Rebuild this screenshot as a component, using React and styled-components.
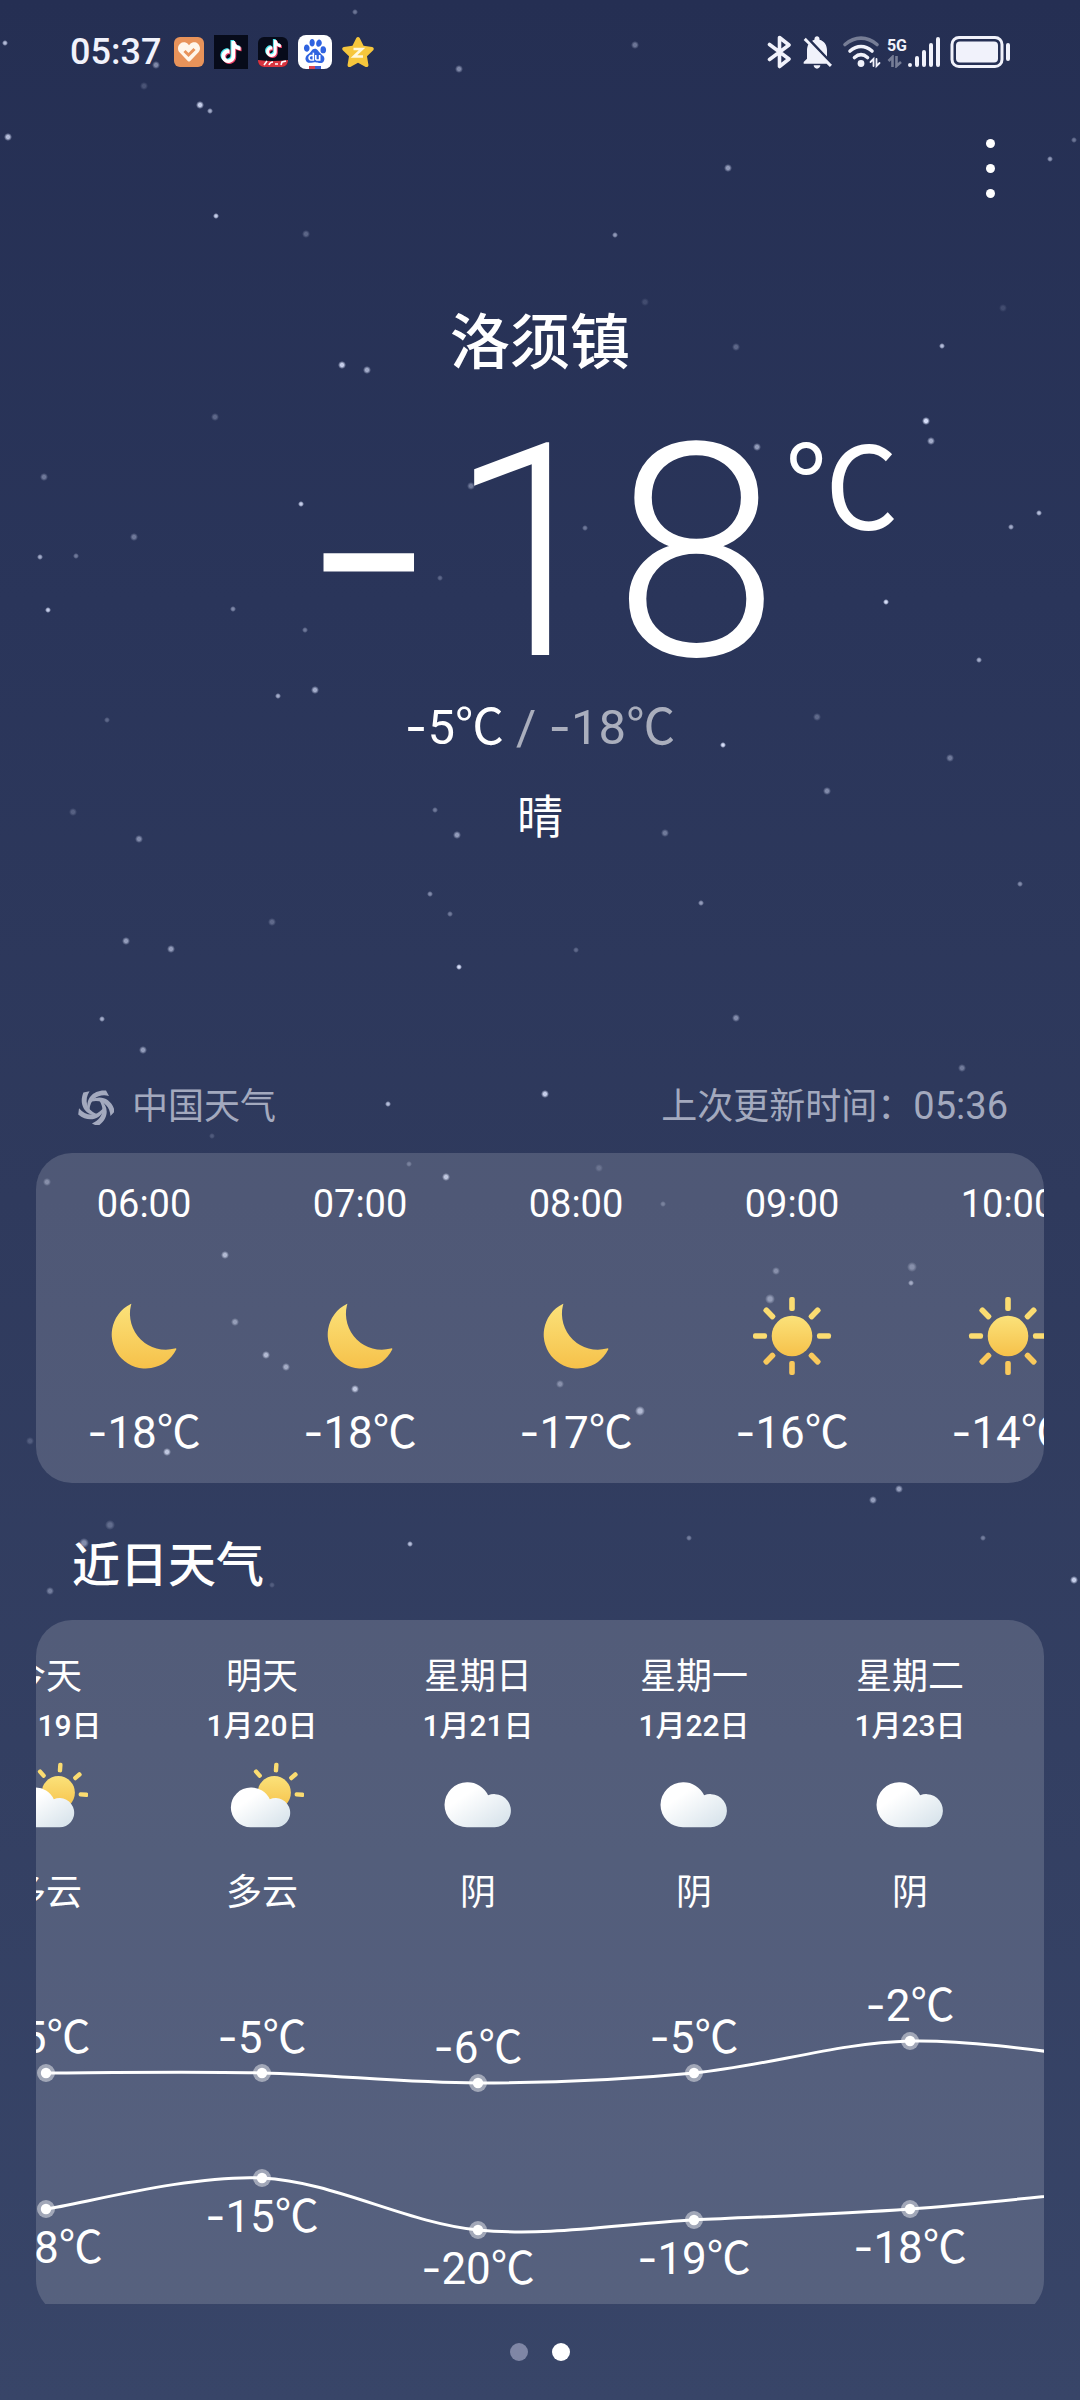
import React, { useLayoutEffect, useRef } from "react";
import styled, { createGlobalStyle, css } from "styled-components";
import { FaHeart, FaStar } from "react-icons/fa";
import { SiBaidu, SiTiktok } from "react-icons/si";
import { MdNotificationsOff } from "react-icons/md";

const COLUMN = 216;

const hours = [
  { time: "06:00", icon: "moon", temp: -18 },
  { time: "07:00", icon: "moon", temp: -18 },
  { time: "08:00", icon: "moon", temp: -17 },
  { time: "09:00", icon: "sun", temp: -16 },
  { time: "10:00", icon: "sun", temp: -14 },
];

const days = [
  { name: "今天", date: "1月19日", icon: "partly", text: "多云" },
  { name: "明天", date: "1月20日", icon: "partly", text: "多云" },
  { name: "星期日", date: "1月21日", icon: "cloud", text: "阴" },
  { name: "星期一", date: "1月22日", icon: "cloud", text: "阴" },
  { name: "星期二", date: "1月23日", icon: "cloud", text: "阴" },
];

// one value more than there are days, so the curves run on past the last column
const highs = [-5, -5, -6, -5, -2, -4];
const lows = [-18, -15, -20, -19, -18, -16];

// x, y, radius, opacity
const stars = [
  [355, 12, 2, 0.4], [5, 43, 2, 0.8], [635, 45, 3, 0.4], [459, 69, 3, 0.5], [156, 65, 3, 0.5],
  [144, 86, 3, 0.2], [200, 105, 3, 0.9], [210, 111, 2, 0.7], [8, 137, 3, 0.8], [728, 168, 3, 0.6],
  [1050, 159, 2, 0.6], [1074, 140, 2, 0.4], [216, 216, 2, 0.9], [306, 234, 3, 0.3], [615, 235, 2, 0.6],
  [645, 302, 3, 0.15], [736, 347, 3, 0.3], [942, 346, 2, 0.8], [1003, 308, 3, 0.15], [342, 365, 3, 0.9],
  [367, 370, 3, 0.7], [215, 417, 3, 0.3], [926, 421, 3, 1], [931, 441, 3, 0.7], [757, 447, 3, 0.6],
  [44, 477, 3, 0.4], [471, 486, 3, 0.4], [301, 504, 2, 0.9], [585, 528, 2, 0.4], [1039, 513, 2, 0.8],
  [1011, 527, 2, 0.7], [134, 537, 3, 0.4], [40, 557, 2, 0.7], [76, 556, 2, 0.4], [440, 578, 2, 0.3],
  [886, 602, 2, 1], [48, 610, 2, 0.9], [233, 609, 2, 0.5], [305, 630, 2, 0.4], [979, 660, 2, 0.7],
  [315, 690, 3, 0.7], [278, 696, 2, 0.7], [107, 720, 2, 0.3], [817, 717, 3, 0.3], [723, 745, 2, 1],
  [950, 758, 3, 0.4], [827, 791, 3, 0.5], [73, 812, 3, 0.25], [435, 810, 2, 0.4], [457, 835, 3, 0.6],
  [139, 839, 3, 0.5], [665, 833, 3, 0.4], [1020, 884, 2, 0.5], [701, 903, 2, 0.6], [430, 894, 2, 0.5],
  [450, 914, 2, 0.4], [272, 922, 3, 0.3], [126, 941, 3, 0.6], [171, 949, 3, 0.6], [576, 950, 2, 0.3],
  [459, 967, 2, 1], [102, 1019, 2, 0.7], [736, 1018, 3, 0.5], [143, 1050, 3, 0.6], [545, 1094, 3, 0.9],
  [962, 1068, 3, 0.4], [388, 1104, 2, 0.8], [212, 1136, 2, 0.2], [409, 1164, 2, 0.3], [446, 1177, 3, 0.8],
  [47, 1182, 3, 0.4], [225, 1255, 3, 0.7], [235, 1322, 3, 0.5], [266, 1355, 3, 0.7], [286, 1367, 3, 0.6],
  [355, 1389, 3, 0.8], [167, 1452, 3, 0.8], [30, 1441, 3, 0.2], [599, 1168, 3, 0.2], [663, 1204, 2, 0.3],
  [776, 1271, 3, 0.4], [912, 1267, 4, 0.4], [911, 1283, 2, 0.6], [770, 1299, 4, 0.5], [560, 1384, 3, 0.4],
  [640, 1411, 4, 0.7], [899, 1489, 3, 0.6], [873, 1500, 3, 0.6], [110, 1525, 4, 0.3],
  [84, 1543, 4, 0.5], [410, 1544, 2, 0.8], [50, 1591, 3, 0.4], [272, 1585, 2, 0.2], [1074, 1580, 3, 0.9],
  [983, 1538, 2, 0.4], [689, 1538, 2, 0.4],
];

const GlobalStyle = createGlobalStyle`
  * {
    box-sizing: border-box;
  }

  body {
    margin: 0;
    background: #2f3a5d;
  }
`;

function Temp({ value }) {
  return (
    <>
      {value < 0 && <Minus>-</Minus>}
      {Math.abs(value)}℃
    </>
  );
}

function Moon() {
  return (
    <WeatherSvg viewBox="0 0 84 84">
      <path
        d="M28.8 10A34 34 0 1 0 74.2 55.6Q74.8 53.8 72.8 54.6A36 36 0 0 1 28.9 11.5Q29.8 9.4 28.8 10Z"
        fill="url(#warm)"
      />
    </WeatherSvg>
  );
}

function Sun() {
  return (
    <WeatherSvg viewBox="0 0 84 84">
      <circle cx="42" cy="42" r="20.3" fill="url(#warm)" />
      {[0, 45, 90, 135, 180, 225, 270, 315].map((angle) => (
        <rect
          key={angle}
          x="39.2"
          y="3"
          width="5.6"
          height="14"
          rx="2"
          fill={angle > 100 && angle < 260 ? "#f9c95c" : "#fbdc71"}
          transform={`rotate(${angle} 42 42)`}
        />
      ))}
    </WeatherSvg>
  );
}

function Partly() {
  return (
    <WeatherSvg viewBox="0 0 84 84">
      <circle cx="54.3" cy="40.7" r="16.6" fill="url(#warm)" />
      {[-41, 4, 49, 94].map((angle) => (
        <rect
          key={angle}
          x="52.2"
          y="10.7"
          width="4.4"
          height="9.6"
          rx="1.8"
          fill="#fbdc71"
          transform={`rotate(${angle} 54.3 40.7)`}
        />
      ))}
      <path d="M30.7 35.6a19.8 19.8 0 0 0 0 39.7H55.6a14.6 14.6 0 1 0-5.8-28A19.8 19.8 0 0 0 30.7 35.6Z" fill="url(#cloud)" />
    </WeatherSvg>
  );
}

function Cloud() {
  return (
    <WeatherSvg viewBox="0 0 84 84">
      <path d="M31 30.3a22.5 22.5 0 0 0 0 45H58.7a16.6 16.6 0 1 0-6.6-32A22.5 22.5 0 0 0 31 30.3Z" fill="url(#cloud)" />
    </WeatherSvg>
  );
}

const icons = { moon: Moon, sun: Sun, partly: Partly, cloud: Cloud };

const yOf = (temp) => Math.round(58 - 10.5 * temp);
const xOf = (index) => COLUMN / 2 + COLUMN * index;

function curve(values) {
  const points = values.map((v, i) => [xOf(i), yOf(v)]);
  const at = (i) => points[Math.max(0, Math.min(points.length - 1, i))];
  let d = `M${points[0][0]} ${points[0][1]}`;
  for (let i = 0; i < points.length - 1; i++) {
    const [p0, p1, p2, p3] = [at(i - 1), at(i), at(i + 1), at(i + 2)];
    d += ` C${p1[0] + (p2[0] - p0[0]) / 6} ${p1[1] + (p2[1] - p0[1]) / 6}`;
    d += ` ${p2[0] - (p3[0] - p1[0]) / 6} ${p2[1] - (p3[1] - p1[1]) / 6}`;
    d += ` ${p2[0]} ${p2[1]}`;
  }
  return d;
}

function TrendLine({ values, labelOffset }) {
  return (
    <g>
      <path d={curve(values)} fill="none" stroke="#fff" strokeWidth="3" />
      {days.map((day, i) => (
        <g key={day.date}>
          <circle cx={xOf(i)} cy={yOf(values[i])} r="9" fill="#fff" fillOpacity="0.45" />
          <circle cx={xOf(i)} cy={yOf(values[i])} r="5.2" fill="#fff" />
          <TrendLabel x={xOf(i)} y={yOf(values[i]) + labelOffset}>
            <tspan fontFamily="Inter">-</tspan>
            {Math.abs(values[i])}℃
          </TrendLabel>
        </g>
      ))}
    </g>
  );
}

function Forecast() {
  const scroller = useRef(null);

  // leave today half out of view on the left
  useLayoutEffect(() => {
    scroller.current.scrollLeft = 98;
  }, []);

  return (
    <ForecastCard ref={scroller}>
      <ForecastInner>
        <Columns>
          {days.map((day) => {
            const Icon = icons[day.icon];
            return (
              <Day key={day.date}>
                <DayName>{day.name}</DayName>
                <DayDate>{day.date}</DayDate>
                <Icon />
                <DayText>{day.text}</DayText>
              </Day>
            );
          })}
        </Columns>
        <Trend width={COLUMN * highs.length} height="354">
          <TrendLine values={highs} labelOffset={-20} />
          <TrendLine values={lows} labelOffset={54} />
        </Trend>
      </ForecastInner>
    </ForecastCard>
  );
}

function StatusIcons() {
  return (
    <StatusGroup $gap={5}>
      <svg width="25" height="34" viewBox="0 0 25 34" fill="none" stroke="#f1f2fb" strokeLinecap="round" strokeLinejoin="round">
        <path d="M2.5 9.5L22 24L12.5 31.5V2.5L22 10L2.5 24.5" strokeWidth="3.6" />
      </svg>
      <MdNotificationsOff size={40} />
      <svg width="40" height="34" viewBox="0 0 40 34" fill="none" strokeLinecap="round">
        <path d="M3 9.5C13 1 25 1 35 9.5" stroke="#f1f2fb" strokeOpacity="0.4" strokeWidth="3.6" />
        <path d="M8 16C15 10 23 10 30 16" stroke="#f1f2fb" strokeWidth="3.6" />
        <path d="M12.5 22.5C17 18.5 21 18.5 25.5 22.5" stroke="#f1f2fb" strokeWidth="3.6" />
        <circle cx="19" cy="28.5" r="3.4" fill="#f1f2fb" />
        <path d="M31.5 31V24L28.5 27M34.5 24V31L37.5 28" stroke="#f1f2fb" strokeWidth="1.8" />
      </svg>
      <Signal>
        <SignalLabel>
          <span>5G</span>
          <svg width="16" height="13" viewBox="0 0 16 13" fill="none" stroke="#f1f2fb" strokeOpacity="0.4" strokeWidth="2.6">
            <path d="M5.5 12V2L1.5 6M9.5 1V11L14 7" />
          </svg>
        </SignalLabel>
        <svg width="34" height="32" viewBox="0 0 34 32" stroke="#f1f2fb" strokeWidth="4" strokeLinecap="round">
          <path d="M3 29V29M10 29V22M17 29V16M24 29V9M31 29V3" />
        </svg>
      </Signal>
      <svg width="66" height="34" viewBox="-4 0 66 34">
        <rect x="2" y="2.5" width="50" height="29" rx="7" fill="none" stroke="#f1f2fb" strokeWidth="3" />
        <rect x="6" y="6.5" width="42" height="21" rx="4" fill="#f1f2fb" />
        <rect x="56" y="8" width="4" height="18" rx="2" fill="#f1f2fb" />
      </svg>
    </StatusGroup>
  );
}

function TiktokMark({ x, y, size }) {
  return (
    <>
      <SiTiktok x={x - 1} y={y - 1} size={size} color="#4de8f0" />
      <SiTiktok x={x + 1} y={y + 1} size={size} color="#f0436a" />
      <SiTiktok x={x} y={y} size={size} color="#fff" />
    </>
  );
}

function NotificationIcons() {
  return (
    <StatusGroup $gap={9}>
      <svg width="32" height="32" viewBox="0 0 32 32">
        <rect x="1" y="1" width="30" height="30" rx="6" fill="#e8935a" />
        <FaHeart x="5" y="5" size={22} color="#fff6ea" />
        <path d="M11.5 15l4 4 6-6" fill="none" stroke="#e8935a" strokeWidth="3" />
      </svg>
      <svg width="34" height="34" viewBox="0 0 34 34">
        <rect width="34" height="34" fill="#070b1a" />
        <TiktokMark x={6} y={6} size={22} />
      </svg>
      <svg width="32" height="32" viewBox="0 0 32 32">
        <rect x="1" y="1" width="30" height="30" rx="6" fill="#070b1a" />
        <TiktokMark x={8} y={4} size={17} />
        <path d="M1 24q14 2 30 0v1a6 6 0 0 1-6 6H7a6 6 0 0 1-6-6z" fill="#d8343f" />
        <path d="M7 29l3-4M12 29q1-3 4-3M18 28h3M24 29l1-3 4-1" stroke="#fff" strokeWidth="1.6" fill="none" />
      </svg>
      <svg width="34" height="34" viewBox="0 0 34 34">
        <rect width="34" height="34" rx="8" fill="#fff" />
        <SiBaidu x="5" y="4" size={24} color="#2f63e0" />
        <rect x="11" y="31" width="6" height="3" fill="#d8434f" />
        <rect x="17" y="31" width="6" height="3" fill="#3a5fd0" />
      </svg>
      <svg width="34" height="34" viewBox="0 0 34 34">
        <FaStar x="0" y="0" size={34} color="#f6c63c" />
        <path d="M12.5 14H21L13 21.5H22" fill="none" stroke="#fff8dc" strokeWidth="2.6" />
      </svg>
    </StatusGroup>
  );
}

function Swirl() {
  return (
    <svg width="36" height="36" viewBox="0 0 36 36" fill="#a3a9be">
      {[0, 72, 144, 216, 288].map((angle) => (
        <path
          key={angle}
          d="M9.8 20C7.5 10 15 0.5 28 1.5L31 7C21 4.5 12.5 9.5 11.5 20.5Z"
          transform={`rotate(${angle} 18 18)`}
        />
      ))}
    </svg>
  );
}

export default function App() {
  return (
    <Screen>
      <GlobalStyle />
      <Sky viewBox="0 0 1080 2400" preserveAspectRatio="xMidYMin slice" aria-hidden="true">
        <defs>
          <linearGradient id="warm" x1="0" y1="0" x2="0" y2="1">
            <stop offset="0" stopColor="#fbe27a" />
            <stop offset="1" stopColor="#f6c14a" />
          </linearGradient>
          <linearGradient id="cloud" x1="0" y1="0" x2="1" y2="1">
            <stop offset="0.3" stopColor="#fff" />
            <stop offset="1" stopColor="#d3e0e9" />
          </linearGradient>
          <radialGradient id="star">
            <stop offset="0.4" stopColor="#d5ddf8" />
            <stop offset="1" stopColor="#d5ddf8" stopOpacity="0" />
          </radialGradient>
        </defs>
        {stars.map(([x, y, r, opacity]) => (
          <circle key={`${x}-${y}`} cx={x} cy={y} r={r + 1} opacity={opacity} fill="url(#star)" />
        ))}
      </Sky>

      <StatusBar>
        <StatusGroup $gap={12}>
          <Clock>05:37</Clock>
          <NotificationIcons />
        </StatusGroup>
        <StatusIcons />
      </StatusBar>

      <Content>
        <Toolbar>
          <MenuButton type="button" aria-label="更多">
            <MenuDot />
            <MenuDot />
            <MenuDot />
          </MenuButton>
        </Toolbar>

        <Current>
          <Place>洛须镇</Place>
          <Now>
            <NowValue>
              <NowMinus>-</NowMinus>18
            </NowValue>
            <NowUnit>℃</NowUnit>
          </Now>
          <Range>
            <Temp value={-5} />
            <RangeLow>
              {" / "}
              <Temp value={-18} />
            </RangeLow>
          </Range>
          <Condition>晴</Condition>
        </Current>

        <SourceRow>
          <Source>
            <Swirl />
            中国天气
          </Source>
          <span>
            上次更新时间：<UpdatedAt>05:36</UpdatedAt>
          </span>
        </SourceRow>

        <HourlyCard>
          {hours.map((hour) => {
            const Icon = icons[hour.icon];
            return (
              <Hour key={hour.time}>
                <HourTime>{hour.time}</HourTime>
                <Icon />
                <HourTemp>
                  <Temp value={hour.temp} />
                </HourTemp>
              </Hour>
            );
          })}
        </HourlyCard>

        <SectionTitle>近日天气</SectionTitle>
        <Forecast />
      </Content>

      <Pager>
        <PagerDot />
        <PagerDot $active />
      </Pager>
    </Screen>
  );
}

const hideScrollbar = css`
  scrollbar-width: none;

  &::-webkit-scrollbar {
    display: none;
  }
`;

const Screen = styled.div`
  position: relative;
  display: flex;
  flex-direction: column;
  height: 100vh;
  color: #fff;
  font-family: Roboto, "Noto Sans CJK SC", sans-serif;
  background: linear-gradient(#252f53, #2a355a 25%, #2f3a5d 50%, #384568);
`;

const Sky = styled.svg`
  position: absolute;
  inset: 0;
  width: 100%;
  height: 100%;
  pointer-events: none;
`;

const StatusBar = styled.header`
  position: relative;
  display: flex;
  align-items: center;
  justify-content: space-between;
  height: 104px;
  padding: 0 68px 0 70px;
  color: #f1f2fb;
`;

const StatusGroup = styled.div`
  display: flex;
  align-items: center;
  gap: ${(props) => props.$gap}px;
`;

const Clock = styled.span`
  font-size: 36px;
  font-weight: 500;
  line-height: 40px;
`;

const Signal = styled.div`
  display: flex;
  align-items: flex-end;
`;

const SignalLabel = styled.div`
  display: flex;
  flex-direction: column;
  font-size: 16px;
  font-weight: 700;
  line-height: 18px;
`;

const Content = styled.main`
  position: relative;
  flex: 1;
  min-height: 0;
  overflow-y: auto;
  ${hideScrollbar}
`;

const Toolbar = styled.div`
  display: flex;
  justify-content: flex-end;
  padding: 20px 58px 0;
`;

const MenuButton = styled.button`
  display: flex;
  flex-direction: column;
  align-items: center;
  justify-content: center;
  gap: 16px;
  width: 64px;
  height: 88px;
  padding: 0;
  border: 0;
  background: none;
`;

const MenuDot = styled.span`
  width: 9px;
  height: 9px;
  border-radius: 50%;
  background: #fff;
`;

const Minus = styled.span`
  font-family: Inter, sans-serif;
  line-height: 0;
`;

const NowMinus = styled(Minus)`
  margin-right: 12px;
`;

const Current = styled.section`
  display: flex;
  flex-direction: column;
  align-items: center;
  padding-top: 96px;
`;

const Place = styled.h1`
  margin: 0;
  font-size: 60px;
  font-weight: 500;
  line-height: 72px;
`;

const Now = styled.div`
  display: grid;
  grid-template-columns: 1fr auto 1fr;
  width: 100%;
  margin-top: 34px;
`;

const NowValue = styled.span`
  grid-column: 2;
  font-size: 298px;
  font-weight: 300;
  line-height: 280px;
`;

const NowUnit = styled.span`
  padding: 6px 0 0 6px;
  font-size: 114px;
  line-height: 140px;
`;

const Range = styled.p`
  margin: 4px 0 0;
  font-size: 49px;
  line-height: 60px;
  white-space: pre;
`;

const RangeLow = styled.span`
  opacity: 0.6;
`;

const Condition = styled.p`
  margin: 29px 0 0;
  font-size: 46px;
  line-height: 60px;
`;

const SourceRow = styled.div`
  display: flex;
  align-items: center;
  justify-content: space-between;
  margin-top: 236px;
  padding: 0 72px 0 78px;
  color: #a3a9be;
  font-size: 36px;
  line-height: 48px;
`;

const Source = styled.div`
  display: flex;
  align-items: center;
  gap: 18px;
`;

const UpdatedAt = styled.time`
  font-size: 38px;
  line-height: 0;
`;

const Card = styled.section`
  margin: 0 36px;
  border-radius: 36px;
  background: rgba(255, 255, 255, 0.155);
  overflow-x: auto;
  ${hideScrollbar}
`;

const HourlyCard = styled(Card)`
  display: flex;
  margin-top: 22px;
  padding: 27px 0 22px;
`;

const Hour = styled.div`
  display: flex;
  flex: 0 0 ${COLUMN}px;
  flex-direction: column;
  align-items: center;
`;

const HourTime = styled.span`
  font-size: 38px;
  line-height: 48px;
`;

const HourTemp = styled.span`
  margin-top: 27px;
  font-size: 44px;
  line-height: 56px;
`;

const WeatherSvg = styled.svg`
  flex: none;
  width: 84px;
  height: 84px;

  ${HourTime} + & {
    margin-top: 66px;
  }
`;

const SectionTitle = styled.h2`
  margin: 47px 72px 18px;
  font-size: 48px;
  font-weight: 500;
  line-height: 72px;
`;

const ForecastCard = styled(Card)`
  overflow-y: hidden;
`;

const ForecastInner = styled.div`
  width: max-content;
  padding-top: 33px;
`;

const Columns = styled.div`
  display: flex;
`;

const Day = styled.div`
  display: flex;
  flex-direction: column;
  align-items: center;
  width: ${COLUMN}px;
`;

const DayName = styled.span`
  font-size: 36px;
  line-height: 48px;
`;

const DayDate = styled.span`
  margin-top: 5px;
  margin-bottom: 6px;
  font-size: 30px;
  font-weight: 500;
  line-height: 40px;
`;

const DayText = styled.span`
  margin-top: 33px;
  font-size: 36px;
  line-height: 48px;
`;

const Trend = styled.svg`
  display: block;
  margin-top: 45px;
`;

const TrendLabel = styled.text`
  fill: #fff;
  font-size: 44px;
  text-anchor: middle;
`;

const Pager = styled.nav`
  position: relative;
  display: flex;
  align-items: center;
  justify-content: center;
  gap: 24px;
  height: 96px;
`;

const PagerDot = styled.span`
  width: 18px;
  height: 18px;
  border-radius: 50%;
  background: ${(props) => (props.$active ? "#fff" : "#7f86a5")};
`;
